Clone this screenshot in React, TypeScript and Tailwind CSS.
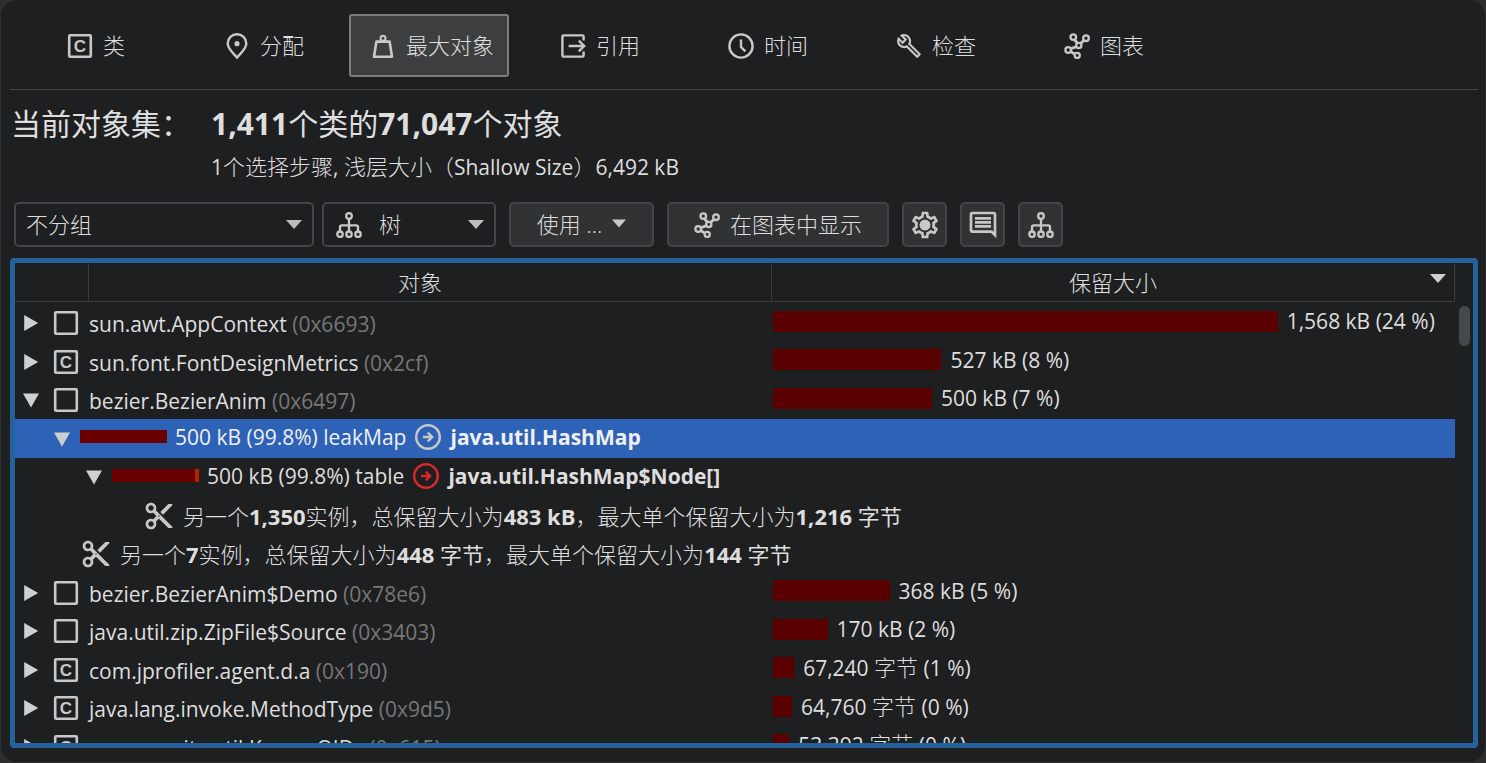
import { type ReactNode } from 'react';
import { clsx } from 'clsx';
import { MdContentCut, MdOutlineBuild, MdOutlineComment, MdOutlineSettings } from 'react-icons/md';

type IconProps = { className?: string };

function Svg({ children, className }: { children: ReactNode; className?: string }) {
  return (
    <svg
      viewBox="0 0 26 26"
      fill="none"
      stroke="currentColor"
      strokeWidth="2.4"
      aria-hidden="true"
      className={clsx('size-[26px] shrink-0', className)}
    >
      {children}
    </svg>
  );
}

function ClassIcon() {
  return (
    <Svg>
      <rect x="2.2" y="2.2" width="21.6" height="21.6" rx="1" strokeWidth="2.6" />
      <text
        x="13"
        y="19"
        textAnchor="middle"
        fill="currentColor"
        stroke="none"
        className="font-['Liberation_Sans'] text-[17px] font-bold"
      >
        C
      </text>
    </Svg>
  );
}

function ObjectIcon() {
  return (
    <Svg>
      <rect x="2.2" y="2.2" width="21.6" height="21.6" rx="1" strokeWidth="2.6" />
    </Svg>
  );
}

function PinIcon() {
  return (
    <Svg>
      <path d="M13 24.6C9.2 20.2 3.7 15.6 3.7 10.5a9.3 9.3 0 0 1 18.6 0c0 5.1-5.5 9.7-9.3 14.1z" />
      <circle cx="13" cy="10.7" r="2.6" fill="currentColor" stroke="none" />
    </Svg>
  );
}

function WeightIcon() {
  return (
    <Svg>
      <path d="M6.4 8.6h13.2l2.4 15.2H4z" strokeLinejoin="round" strokeWidth="2.6" />
      <circle cx="13" cy="5.3" r="2.5" strokeWidth="2" />
    </Svg>
  );
}

function ReferenceIcon() {
  return (
    <Svg>
      <path d="M23.6 7.4V3.4a1 1 0 0 0-1-1H3.4a1 1 0 0 0-1 1v19.2a1 1 0 0 0 1 1h19.2a1 1 0 0 0 1-1v-4" />
      <path d="M8.6 13h15M18.8 7.6l5.4 5.4-5.4 5.4" />
    </Svg>
  );
}

function ClockIcon() {
  return (
    <Svg>
      <circle cx="13" cy="13" r="11.6" />
      <path d="M13 6.5V14l4.4 4.4" />
    </Svg>
  );
}

function GraphIcon() {
  return (
    <Svg>
      <g strokeWidth="2.3">
        <circle cx="9.3" cy="4.1" r="2.8" />
        <circle cx="22" cy="5.2" r="2.8" />
        <circle cx="14.8" cy="12.5" r="2.6" />
        <circle cx="4.2" cy="17" r="2.8" />
        <circle cx="13.2" cy="22.4" r="2.6" />
        <path d="M10.5 6.8l3 3.4M20 7.2l-3.4 3.4M12.4 13.6l-5.6 2.2M6.6 18.5l4.2 2.6" strokeWidth="2.8" />
      </g>
    </Svg>
  );
}

function TreeIcon({ className }: IconProps) {
  return (
    <Svg className={className}>
      <g strokeWidth="2.3">
        <circle cx="13" cy="4" r="2.8" />
        <circle cx="4" cy="22.2" r="2.7" />
        <circle cx="13" cy="22.2" r="2.7" />
        <circle cx="22" cy="22.2" r="2.7" />
        <path d="M13 7v12.4M4 19.4V15a1.6 1.6 0 0 1 1.6-1.6h14.8A1.6 1.6 0 0 1 22 15v4.4" />
      </g>
    </Svg>
  );
}

function GearIcon() {
  return (
    <svg viewBox="0 0 24 24" className="size-8" aria-hidden="true">
      <MdOutlineSettings size={24} />
      <circle cx="12" cy="12" r="4" fill="currentColor" />
    </svg>
  );
}

function GoToIcon({ className }: IconProps) {
  return (
    <Svg className={className}>
      <circle cx="13" cy="13" r="11.8" />
      <path d="M8 13h8.6M12.8 8.6l4.4 4.4-4.4 4.4" />
    </Svg>
  );
}

function DownTriangle({ className }: IconProps) {
  return (
    <svg viewBox="0 0 16 9" fill="currentColor" aria-hidden="true" className={clsx('h-[9px] w-4 shrink-0', className)}>
      <path d="M0 0h16L8 9z" />
    </svg>
  );
}

const tabs = [
  { label: '类', icon: <ClassIcon /> },
  { label: '分配', icon: <PinIcon /> },
  { label: '最大对象', icon: <WeightIcon />, active: true },
  { label: '引用', icon: <ReferenceIcon /> },
  { label: '时间', icon: <ClockIcon /> },
  { label: '检查', icon: <MdOutlineBuild size={26} /> },
  { label: '图表', icon: <GraphIcon /> },
];

function Toggle({ open }: { open?: boolean }) {
  return (
    <button type="button" aria-label={open ? '折叠' : '展开'} className="flex w-[18px] shrink-0 justify-center text-[#cfcfcf]">
      <svg viewBox="0 0 16 16" fill="currentColor" className="size-4" aria-hidden="true">
        {open ? <path d="M0 1.4h16L8 15.4z" /> : <path d="M1.2 0v16l14-8z" />}
      </svg>
    </button>
  );
}

type ObjectRowProps = { name: string; id: string; size: ReactNode; bar: number; isClass?: boolean; open?: boolean };

function ObjectRow({ name, id, size, bar, isClass, open }: ObjectRowProps) {
  return (
    <tr className="h-[38px] even:h-[39px]">
      <td colSpan={2} className="p-0">
        <div className="flex items-center pl-[7px] text-[#c8c8c8]">
          <Toggle open={open} />
          <span className="ml-[13px] mr-[10px]">{isClass ? <ClassIcon /> : <ObjectIcon />}</span>
          <span className="pt-[2px] text-[#dedede]">
            {name} <span className="text-[#777777]">({id})</span>
          </span>
        </div>
      </td>
      <td className="p-0">
        <div className="flex items-center gap-[9px] pb-1 pl-px">
          <div className="h-[21px] shrink-0 bg-[#5a0000]" style={{ width: `${bar}%` }} />
          <span>{size}</span>
        </div>
      </td>
    </tr>
  );
}

type FieldRowProps = { indent: string; share: string; type: string; leak?: boolean; selected?: boolean };

function FieldRow({ indent, share, type, leak, selected }: FieldRowProps) {
  return (
    <tr className={clsx('h-[38px] even:h-[39px]', selected && 'bg-[#2e62b6] text-[#f0f0f0]')}>
      <td colSpan={3} className="p-0">
        <div className={clsx('flex items-center', indent)}>
          <Toggle open />
          <div className="mb-1 ml-[9px] mr-2 flex h-[13px] w-[87px] justify-end bg-[#6a0000]">
            {leak && <div className="w-1 bg-[#b02400]" />}
          </div>
          <div className="flex items-center gap-[9px] pb-[3px]">
            <span>{share}</span>
            <GoToIcon className={leak ? 'text-[#d42a2a]' : 'text-[#c8c8c8]'} />
            <b>{type}</b>
          </div>
        </div>
      </td>
    </tr>
  );
}

function CutoffRow({ indent, children }: { indent: string; children: ReactNode }) {
  return (
    <tr className="h-[38px] even:h-[39px]">
      <td colSpan={3} className="p-0">
        <div className={clsx('flex items-center gap-2', indent)}>
          <MdContentCut size={32} className="shrink-0 text-[#c8c8c8]" />
          <span className="text-[22px] font-light">{children}</span>
        </div>
      </td>
    </tr>
  );
}

// Chinese runs are set a little larger and lighter than the latin text
function Zh({ children }: { children: ReactNode }) {
  return <span className="text-[22px] font-light">{children}</span>;
}

function Num({ children }: { children: ReactNode }) {
  return <b className="font-bold">{children}</b>;
}

const control = 'h-[45px] rounded-[5px] border-2 border-[#434548]';
const button = clsx(control, 'flex items-center justify-center bg-[#303234]');

export default function App() {
  return (
    <div className="h-screen bg-[#2b2d2f] px-px pb-px font-['Open_Sans','Noto_Sans_CJK_SC',sans-serif] text-[21px] leading-[30px] text-[#dedede]">
      <main className="flex h-full flex-col overflow-hidden rounded-[16px] bg-[#1e1f21] pb-[14px] pl-[9px] pr-[7px]">
        <nav className="flex gap-2 border-b border-[#444648] pb-3 pl-[3px] pt-[14px]">
          {tabs.map((tab) => (
            <button
              key={tab.label}
              type="button"
              className={clsx(
                'flex h-[63px] w-40 items-center justify-center gap-[10px] rounded-[3px] border-2 pl-[6px] text-[22px] font-light',
                tab.active ? 'border-[#7a7c7e] bg-[#3d3e40]' : 'border-transparent',
              )}
            >
              <span className="text-[#c8c8c8]">{tab.icon}</span>
              <span className="pb-[2px]">{tab.label}</span>
            </button>
          ))}
        </nav>

        <header className="grid grid-cols-[196px_1fr] gap-x-1 pl-px pt-[13px]">
          <div className="text-[30px] leading-[42px]">当前对象集：</div>
          <h1 className="text-[30px] leading-[42px]">
            <Num>1,411</Num>个类的<Num>71,047</Num>个对象
          </h1>
          <p className="col-start-2 leading-[42px]">
            1<Zh>个选择步骤</Zh>, <Zh>浅层大小（</Zh>Shallow Size<Zh>）</Zh>6,492 kB
          </p>
        </header>

        <div className="flex items-center gap-[13px] pb-[11px] pl-1 pt-[14px]">
          <div className="flex gap-2 text-[#bdbdbd]">
            <div className="relative flex items-center">
              <select
                aria-label="分组"
                className={clsx(control, 'w-[300px] appearance-none pb-[2px] pl-[10px] text-[22px] font-light text-[#dedede]')}
              >
                <option>不分组</option>
              </select>
              <DownTriangle className="pointer-events-none absolute right-3" />
            </div>
            <div className="relative flex items-center">
              <select
                aria-label="视图"
                className={clsx(control, 'w-[174px] appearance-none pb-[2px] pl-[55px] text-[22px] font-light text-[#dedede]')}
              >
                <option>树</option>
              </select>
              <TreeIcon className="pointer-events-none absolute left-[14px] text-[#c8c8c8]" />
              <DownTriangle className="pointer-events-none absolute right-3" />
            </div>
          </div>
          <button type="button" className={clsx(button, 'w-[145px] gap-[10px] pb-[2px] text-[22px] font-light')}>
            使用 ...
            <DownTriangle className="w-[14px] text-[#c8c8c8]" />
          </button>
          <button type="button" className={clsx(button, 'w-[222px] gap-[10px] text-[22px] font-light')}>
            <span className="text-[#c8c8c8]">
              <GraphIcon />
            </span>
            <span className="pb-[2px]">在图表中显示</span>
          </button>
          <button type="button" aria-label="设置" className={clsx(button, 'w-[45px] text-[#c8c8c8]')}>
            <GearIcon />
          </button>
          <button type="button" aria-label="注释" className={clsx(button, 'w-[45px] text-[#c8c8c8]')}>
            <MdOutlineComment size={32} />
          </button>
          <button type="button" aria-label="树形视图" className={clsx(button, 'w-[45px] text-[#c8c8c8]')}>
            <TreeIcon />
          </button>
        </div>

        <section className="flex min-h-0 flex-1 overflow-hidden rounded-[4px] border-[5px] border-[#25629c]">
          <div className="min-w-0 flex-1 overflow-hidden">
            <table className="w-full table-fixed border-separate border-spacing-0 whitespace-nowrap">
              <thead>
                <tr className="text-[22px]">
                  <th className="w-[74px] p-0 pb-[2px]">
                    <div className="h-[39px] border-b border-r border-[#3a3c3e]" />
                  </th>
                  <th className="p-0 pb-[2px] font-light">
                    <div className="flex h-[39px] items-center justify-center border-b border-r border-[#3a3c3e] pr-5">
                      对象
                    </div>
                  </th>
                  <th className="p-0 pb-[2px] font-light" aria-sort="descending">
                    <div className="relative flex h-[39px] items-center justify-center border-b border-r border-[#3a3c3e]">
                      保留大小
                      <DownTriangle className="absolute right-2 top-[11px] text-[#cfcfcf]" />
                    </div>
                  </th>
                </tr>
              </thead>
              <tbody>
                <ObjectRow name="sun.awt.AppContext" id="0x6693" bar={74} size="1,568 kB (24 %)" />
                <ObjectRow name="sun.font.FontDesignMetrics" id="0x2cf" bar={24.7} size="527 kB (8 %)" isClass />
                <ObjectRow name="bezier.BezierAnim" id="0x6497" bar={23.3} size="500 kB (7 %)" open />
                <FieldRow indent="pl-[38px]" share="500 kB (99.8%) leakMap" type="java.util.HashMap" selected />
                <FieldRow indent="pl-[70px]" share="500 kB (99.8%) table" type="java.util.HashMap$Node[]" leak />
                <CutoffRow indent="pl-[128px]">
                  另一个<Num>1,350</Num>实例，总保留大小为<Num>483 kB</Num>，最大单个保留大小为<Num>1,216</Num>{' '}
                  <span className="font-normal">字节</span>
                </CutoffRow>
                <CutoffRow indent="pl-[65px]">
                  另一个<Num>7</Num>实例，总保留大小为<Num>448</Num> <span className="font-normal">字节</span>
                  ，最大单个保留大小为<Num>144</Num> <span className="font-normal">字节</span>
                </CutoffRow>
                <ObjectRow name="bezier.BezierAnim$Demo" id="0x78e6" bar={17.1} size="368 kB (5 %)" />
                <ObjectRow name="java.util.zip.ZipFile$Source" id="0x3403" bar={8} size="170 kB (2 %)" />
                <ObjectRow name="com.jprofiler.agent.d.a" id="0x190" bar={3.1} size={<>67,240 <Zh>字节</Zh> (1 %)</>} isClass />
                <ObjectRow name="java.lang.invoke.MethodType" id="0x9d5" bar={2.8} size={<>64,760 <Zh>字节</Zh> (0 %)</>} isClass />
                <ObjectRow name="sun.security.util.KnownOIDs" id="0x615" bar={2.4} size={<>53,392 <Zh>字节</Zh> (0 %)</>} isClass />
              </tbody>
            </table>
          </div>
          <div className="w-[18px] shrink-0 bg-[#1e2022] pt-[43px]">
            <div className="ml-1 h-10 w-[11px] rounded-full bg-[#45484d]" />
          </div>
        </section>
      </main>
    </div>
  );
}
